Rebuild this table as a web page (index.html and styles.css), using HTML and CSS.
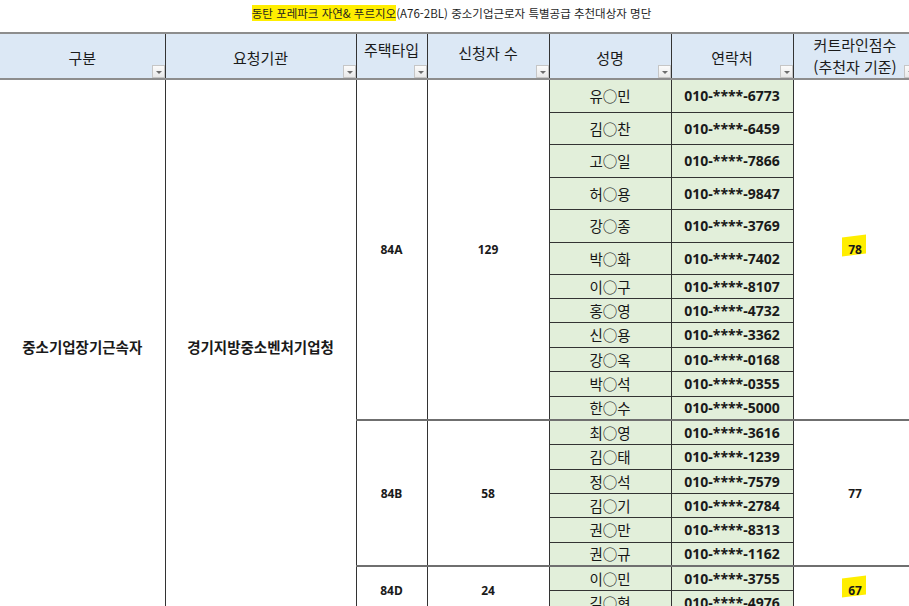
FILE: index.html
```html
<!DOCTYPE html>
<html lang="ko">
<head>
<meta charset="utf-8">
<link rel="stylesheet" href="styles.css">
</head>
<body>
<div class="title"><span class="mark">동탄 포레파크 자연&amp; 푸르지오</span>(A76-2BL) 중소기업근로자 특별공급 추천대상자 명단</div>
<table class="sheet">
  <colgroup>
    <col class="c1"><col class="c2"><col class="c3"><col class="c4"><col class="c5"><col class="c6"><col class="c7">
  </colgroup>
  <thead>
    <tr class="hrow">
      <th class="h-mid">구분<span class="fb"></span></th>
      <th class="h-mid">요청기관<span class="fb"></span></th>
      <th class="h-top">주택타입<span class="fb"></span></th>
      <th class="h-up">신청자 수<span class="fb"></span></th>
      <th class="h-mid">성명<span class="fb"></span></th>
      <th class="h-mid">연락처<span class="fb"></span></th>
      <th class="h-two">커트라인점수<br>(추천자 기준)<span class="fb"></span></th>
    </tr>
  </thead>
  <tbody>
    <tr class="r33">
      <td class="cat" rowspan="20">중소기업장기근속자</td>
      <td class="cat" rowspan="20">경기지방중소벤처기업청</td>
      <td class="grp" rowspan="12">84A</td>
      <td class="grp" rowspan="12">129</td>
      <td class="nm">유○민</td><td class="ph">010-****-6773</td>
      <td class="grp" rowspan="12"><span class="hl">78</span></td>
    </tr>
    <tr class="r32"><td class="nm">김○찬</td><td class="ph">010-****-6459</td></tr>
    <tr class="r33"><td class="nm">고○일</td><td class="ph">010-****-7866</td></tr>
    <tr class="r32"><td class="nm">허○용</td><td class="ph">010-****-9847</td></tr>
    <tr class="r33"><td class="nm">강○종</td><td class="ph">010-****-3769</td></tr>
    <tr class="r32"><td class="nm">박○화</td><td class="ph">010-****-7402</td></tr>
    <tr class="r24"><td class="nm">이○구</td><td class="ph">010-****-8107</td></tr>
    <tr class="r24"><td class="nm">홍○영</td><td class="ph">010-****-4732</td></tr>
    <tr class="r25"><td class="nm">신○용</td><td class="ph">010-****-3362</td></tr>
    <tr class="r24"><td class="nm">강○옥</td><td class="ph">010-****-0168</td></tr>
    <tr class="r25"><td class="nm">박○석</td><td class="ph">010-****-0355</td></tr>
    <tr class="r24"><td class="nm">한○수</td><td class="ph">010-****-5000</td></tr>
    <tr class="r24 gstart">
      <td class="grp" rowspan="6">84B</td>
      <td class="grp" rowspan="6">58</td>
      <td class="nm">최○영</td><td class="ph">010-****-3616</td>
      <td class="grp" rowspan="6">77</td>
    </tr>
    <tr class="r25"><td class="nm">김○태</td><td class="ph">010-****-1239</td></tr>
    <tr class="r24"><td class="nm">정○석</td><td class="ph">010-****-7579</td></tr>
    <tr class="r24"><td class="nm">김○기</td><td class="ph">010-****-2784</td></tr>
    <tr class="r25"><td class="nm">권○만</td><td class="ph">010-****-8313</td></tr>
    <tr class="r24"><td class="nm">권○규</td><td class="ph">010-****-1162</td></tr>
    <tr class="r24 gstart">
      <td class="grp" rowspan="2">84D</td>
      <td class="grp" rowspan="2">24</td>
      <td class="nm">이○민</td><td class="ph">010-****-3755</td>
      <td class="grp" rowspan="2"><span class="hl">67</span></td>
    </tr>
    <tr class="r24"><td class="nm">김○현</td><td class="ph">010-****-4976</td></tr>
  </tbody>
</table>
</body>
</html>
```

FILE: styles.css
```css
html, body {
  margin: 0;
  padding: 0;
}
body {
  width: 909px;
  height: 606px;
  overflow: hidden;
  background: #ffffff;
  color: #151515;
  font-family: "Noto Sans CJK KR", "Noto Sans", sans-serif;
}
.title {
  height: 32px;
  box-sizing: border-box;
  padding: 5px 6px 0 0;
  font-size: 11.5px;
  line-height: 16px;
  text-align: center;
  color: #1f1f1f;
  white-space: nowrap;
}
.mark {
  background: #ffee00;
}
.sheet {
  border-collapse: collapse;
  table-layout: fixed;
  width: 917px;
}
.c1 { width: 165px; }
.c2 { width: 191px; }
.c3 { width: 71px; }
.c4 { width: 122px; }
.c5 { width: 122px; }
.c6 { width: 122px; }
.c7 { width: 124px; }
.sheet th, .sheet td {
  border: 1px solid #333;
  padding: 0;
  text-align: center;
  vertical-align: middle;
  white-space: nowrap;
  overflow: hidden;
}
.sheet th:first-child, .sheet td:first-child {
  border-left: none;
}
.sheet thead th {
  position: relative;
  background: #dce8f5;
  font-weight: 400;
  font-size: 15px;
  line-height: 22px;
  color: #1a1a1a;
  border-top: 2px solid #8d8d8d;
  border-bottom: 2px solid #8d8d8d;
}
.sheet thead th.h-mid { height: 40px; padding-top: 4px; }
.sheet thead th.h-up { height: 38px; padding-bottom: 6px; }
.sheet thead th.h-top { height: 39px; vertical-align: top; padding-top: 5px; }
.sheet thead th.h-two { height: 44px; line-height: 22px; }
.fb {
  position: absolute;
  right: 0;
  bottom: 0;
  width: 13px;
  height: 13px;
  box-sizing: border-box;
  border: 1px solid #c6c6c6;
  background: linear-gradient(#fbfbfb, #e9e9e9);
}
.fb::after {
  content: "";
  position: absolute;
  left: 3px;
  top: 5px;
  border-left: 3px solid transparent;
  border-right: 3px solid transparent;
  border-top: 3px solid #6d6d6d;
}
.r33 { height: 33px; }
.r32 { height: 32px; }
.r25 { height: 25px; }
.r24 { height: 24px; }
.gstart > td {
  border-top: 2px solid #6f6f6f;
}
.cat {
  font-weight: 700;
  font-size: 14.5px;
  color: #1a1a1a;
}
.grp {
  font-family: "Noto Sans", sans-serif;
  font-weight: 700;
  font-size: 12px;
  color: #1a1a1a;
}
.nm {
  background: #e2efda;
  font-size: 14.5px;
  color: #161616;
}
.ph {
  background: #e2efda;
  font-family: "Noto Sans", sans-serif;
  font-weight: 700;
  font-size: 14px;
  color: #1a1a1a;
}
.hl {
  position: relative;
  display: inline-block;
  isolation: isolate;
}
.hl::before {
  content: "";
  position: absolute;
  left: -6px;
  right: -4px;
  top: -5px;
  bottom: 3px;
  background: #ffee00;
  transform: skewY(-7deg);
  z-index: -1;
}
```
